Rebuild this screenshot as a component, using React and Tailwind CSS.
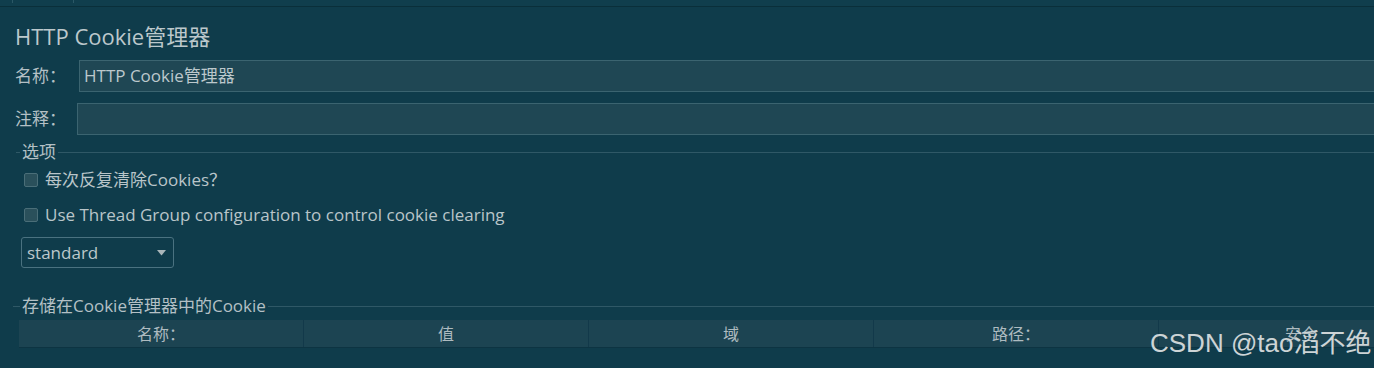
import React from "react";

const cjk = { fontFamily: '"Open Sans", "Noto Sans CJK SC", sans-serif' };

function Legend({ title, dashW }) {
  return (
    <div className="flex h-[20px] items-center">
      <div className={`h-px bg-[#2f5866] ${dashW}`} />
      <span className="px-[2px] text-[17px] leading-[20px] text-[#b3c0c5]">{title}</span>
      <div className="h-px flex-1 bg-[#2f5866]" />
    </div>
  );
}

function Checkbox({ label }) {
  return (
    <div className="flex h-[20px] items-center gap-[7px] pl-[20px]">
      <div className="h-[14px] w-[14px] rounded-[2px] border border-[#4a6e78] bg-[#2a505b]" />
      <span className="text-[17px] leading-[20px] text-[#b9c5c9]">{label}</span>
    </div>
  );
}

export default function App() {
  const cols = ["名称：", "值", "域", "路径：", "安全"];
  return (
    <div
      className="relative h-[368px] w-[1374px] overflow-hidden bg-[#0f3c4b]"
      style={cjk}
    >
      {/* top strip */}
      <div className="flex h-[7px] border-b border-[#0a2f3a] bg-[#103e4d]">
        <div className="ml-[12px] h-[3px] w-px bg-[#2b5866]" />
        <div className="ml-[60px] h-[3px] w-px bg-[#2b5866]" />
      </div>
      <div className="flex">
        <div className="ml-[4px] w-px self-stretch bg-[#2a5462]" />
        <div className="flex flex-1 flex-col">
          {/* title */}
          <div className="pl-[11px] pt-[16px] text-[22px] leading-[26px] text-[#bcc8cc]">
            HTTP Cookie管理器
          </div>
          {/* name row */}
          <div className="mt-[11px] flex items-center">
            <div className="w-[75px] pl-[11px] text-[17px] text-[#b4c0c5]">名称：</div>
            <div className="-mr-[4px] flex h-[32px] flex-1 items-center border border-[#3b6470] bg-[#1f4754] pl-[4px] text-[17px] text-[#bcc8cc]">
              HTTP Cookie管理器
            </div>
          </div>
          {/* comment row */}
          <div className="mt-[11px] flex items-center">
            <div className="w-[73px] pl-[11px] text-[17px] text-[#b4c0c5]">注释：</div>
            <div className="-mr-[4px] h-[32px] flex-1 border border-[#3b6470] bg-[#1f4754]" />
          </div>
          {/* options */}
          <div className="mt-[7px] ml-[12px]">
            <Legend title="选项" dashW="w-[4px]" />
          </div>
          <div className="mt-[8px]">
            <Checkbox label="每次反复清除Cookies？" />
          </div>
          <div className="mt-[15px]">
            <Checkbox label="Use Thread Group configuration to control cookie clearing" />
          </div>
          <div className="ml-[17px] mt-[12px] flex h-[31px] w-[153px] items-center justify-between rounded-[3px] border border-[#4a7280] pl-[5px] pr-[7px]">
            <span className="text-[17px] text-[#bcc8cc]">standard</span>
            <svg width="9" height="6" viewBox="0 0 9 6">
              <path d="M0 0 L9 0 L4.5 5.5 Z" fill="#a9b6ba" />
            </svg>
          </div>
          {/* stored cookies */}
          <div className="mt-[28px] ml-[9px]">
            <Legend title="存储在Cookie管理器中的Cookie" dashW="w-[7px]" />
          </div>
          <div className="ml-[15px] mt-[4px] flex h-[28px] border-b border-[#0d3442] bg-[#1c4452]">
            {cols.map((c, i) => (
              <div
                key={i}
                className="flex w-[285px] shrink-0 items-center justify-center border-r border-[#12394a] text-[16px] text-[#aebbc0]"
              >
                {c}
              </div>
            ))}
          </div>
        </div>
      </div>
      {/* watermark */}
      <div
        className="absolute left-[1150px] top-[327px] text-[26px] leading-[32px] text-[#cdd4d6]"
        style={{ fontFamily: '"Liberation Sans", "Noto Sans CJK SC", sans-serif' }}
      >
        CSDN @tao滔不绝
      </div>
    </div>
  );
}
